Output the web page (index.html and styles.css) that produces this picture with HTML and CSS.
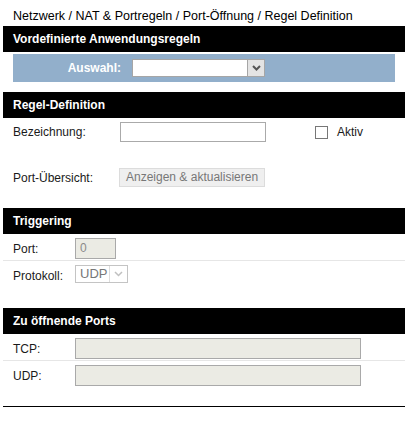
FILE: index.html
```html
<!DOCTYPE html>
<html lang="de">
<head>
<meta charset="utf-8">
<title>Regel Definition</title>
<link rel="stylesheet" href="styles.css">
</head>
<body>
<div class="page">
  <div class="crumb">Netzwerk / NAT &amp; Portregeln / Port-Öffnung / Regel Definition</div>

  <div class="bar">Vordefinierte Anwendungsregeln</div>
  <div class="panel">
    <span class="panel-label">Auswahl:</span>
    <div class="select select-main">
      <span class="select-value"></span>
      <span class="select-arrow">
        <svg width="9" height="6" viewBox="0 0 9 6"><path d="M1 1 L4.5 4.5 L8 1" fill="none" stroke="#555" stroke-width="2"/></svg>
      </span>
    </div>
  </div>

  <div class="bar bar-gap">Regel-Definition</div>
  <div class="def-row">
    <span class="def-label">Bezeichnung:</span>
    <div class="input input-name"></div>
    <span class="check"></span>
    <span class="check-label">Aktiv</span>
  </div>
  <div class="def-row def-row-second">
    <span class="def-label">Port-Übersicht:</span>
    <div class="btn">Anzeigen &amp; aktualisieren</div>
  </div>

  <div class="bar bar-gap2">Triggering</div>
  <div class="row row-sep">
    <span class="row-label">Port:</span>
    <div class="input input-ro input-port">0</div>
  </div>
  <div class="row">
    <span class="row-label">Protokoll:</span>
    <div class="select select-proto">
      <span class="select-value">UDP</span>
      <span class="select-arrow">
        <svg width="9" height="6" viewBox="0 0 9 6"><path d="M1 1 L4.5 4.5 L8 1" fill="none" stroke="#c0c0c0" stroke-width="1.5"/></svg>
      </span>
    </div>
  </div>

  <div class="bar bar-gap3">Zu öffnende Ports</div>
  <div class="row row-sep">
    <span class="row-label">TCP:</span>
    <div class="input input-ro input-wide"></div>
  </div>
  <div class="row">
    <span class="row-label">UDP:</span>
    <div class="input input-ro input-wide"></div>
  </div>

  <div class="bottom-line"></div>
</div>
</body>
</html>
```
FILE: styles.css
```css
html, body {
  margin: 0;
  padding: 0;
  background: #fff;
}
body {
  font-family: "Liberation Sans", Arial, sans-serif;
  font-size: 12px;
  color: #1a1a1a;
}
.page {
  margin-left: 3px;
  width: 402px;
}
.crumb {
  height: 26px;
  box-sizing: border-box;
  padding: 9px 0 0 10px;
  line-height: 14px;
  font-size: 12.5px;
  color: #000;
}
.bar {
  height: 26px;
  line-height: 26px;
  background: #000;
  color: #fff;
  font-weight: bold;
  padding-left: 10px;
}
.bar-gap { margin-top: 10px; }
.bar-gap2 { margin-top: 21px; }
.bar-gap3 { margin-top: 21px; }

.panel {
  margin: 2px 10px 0 10px;
  height: 28px;
  background: #92afcb;
  display: flex;
  align-items: center;
}
.panel-label {
  width: 108px;
  box-sizing: border-box;
  text-align: right;
  color: #fff;
  font-weight: bold;
  margin-right: 11px;
}
.select {
  display: flex;
  box-sizing: border-box;
  border: 1px solid #a6a6a6;
  background: #fff;
}
.select-main {
  width: 133px;
  height: 18px;
  margin-top: -1px;
}
.select-value {
  flex: 1;
  padding-left: 4px;
  line-height: 16px;
}
.select-arrow {
  width: 16px;
  display: flex;
  align-items: center;
  justify-content: center;
  background: #e4e4e4;
  border-left: 1px solid #a6a6a6;
}

.def-row {
  display: flex;
  align-items: center;
  padding-left: 10px;
  margin-top: 4px;
  height: 20px;
}
.def-row-second {
  margin-top: 26px;
  height: 19px;
}
.def-label {
  width: 106px;
}
.input {
  box-sizing: border-box;
  border: 1px solid #aaa;
  background: #fff;
}
.input-name {
  width: 146px;
  height: 20px;
  margin-left: 1px;
}
.check {
  width: 13px;
  height: 13px;
  box-sizing: border-box;
  border: 1px solid #777;
  margin-left: 49px;
  background: #fff;
}
.check-label {
  margin-left: 9px;
}
.btn {
  width: 146px;
  height: 19px;
  box-sizing: border-box;
  border: 1px solid #dcdcdc;
  background: #efefef;
  color: #777;
  line-height: 17px;
  padding-left: 6px;
}

.row {
  display: flex;
  align-items: center;
  padding: 4px 0 1px 10px;
  height: 21px;
}
.row-sep {
  border-bottom: 1px solid #e6e6e6;
}
.row-label {
  width: 62px;
}
.input-ro {
  background: #ebebe4;
  border-color: #a9a9a9;
  height: 21px;
}
.input-port {
  width: 41px;
  color: #8a8a8a;
  padding-left: 4px;
  line-height: 19px;
}
.select-proto {
  width: 53px;
  height: 18px;
  align-self: flex-start;
  border-color: #c4c4c4;
  color: #777;
  font-size: 13px;
}
.select-proto .select-value {
  padding-left: 4px;
}
.select-proto .select-arrow {
  width: 17px;
  background: #fff;
  border-left: 1px solid #ddd;
}
.input-wide {
  width: 286px;
}
.bottom-line {
  margin-top: 19px;
  border-top: 1px solid #000;
}
```
